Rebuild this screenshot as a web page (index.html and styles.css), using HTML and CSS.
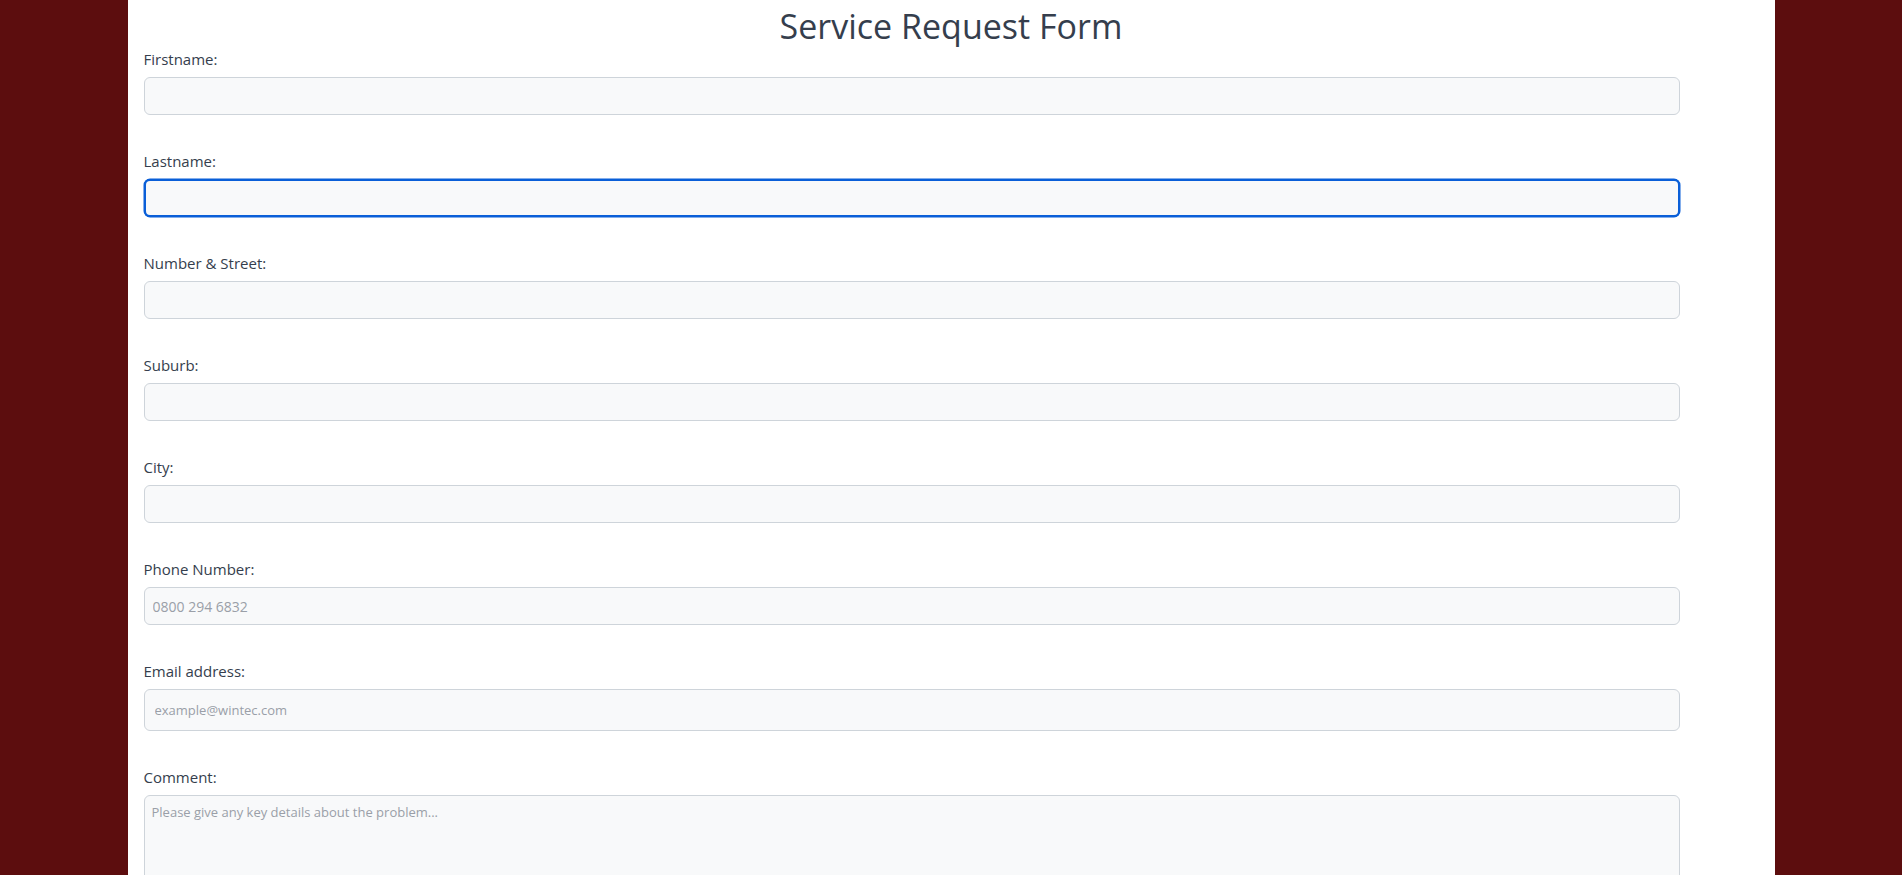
FILE: index.html
```html
<!DOCTYPE html>
<html lang="en">
<head>
<meta charset="utf-8">
<title>Service Request Form</title>
<link rel="stylesheet" href="styles.css">
</head>
<body>
<main class="panel">
  <h1 class="title">Service Request Form</h1>
  <form class="form">
    <div class="field">
      <label class="label" for="fn">Firstname:</label>
      <input class="input" id="fn" type="text">
    </div>
    <div class="field">
      <label class="label" for="ln">Lastname:</label>
      <input class="input input-focus" id="ln" type="text">
    </div>
    <div class="field">
      <label class="label" for="st">Number &amp; Street:</label>
      <input class="input" id="st" type="text">
    </div>
    <div class="field">
      <label class="label" for="sb">Suburb:</label>
      <input class="input" id="sb" type="text">
    </div>
    <div class="field">
      <label class="label" for="ct">City:</label>
      <input class="input" id="ct" type="text">
    </div>
    <div class="field">
      <label class="label" for="ph">Phone Number:</label>
      <input class="input input-phone" id="ph" type="tel" placeholder="0800 294 6832">
    </div>
    <div class="field">
      <label class="label" for="em">Email address:</label>
      <input class="input input-email" id="em" type="email" placeholder="example@wintec.com">
    </div>
    <div class="field">
      <label class="label" for="cm">Comment:</label>
      <textarea class="input textarea" id="cm" placeholder="Please give any key details about the problem..."></textarea>
    </div>
  </form>
</main>
</body>
</html>
```

FILE: styles.css
```css
html {
  overflow: hidden;
}
body {
  margin: 0;
  background: #5c0d0e;
  font-family: "Open Sans", "Noto Sans", "Liberation Sans", sans-serif;
  color: #353e4d;
}
.panel {
  width: 1647px;
  margin: 0 auto;
  background: #ffffff;
  min-height: 875px;
  box-sizing: border-box;
  padding: 0 95px 40px 16px;
}
.title {
  margin: 0 0 0 79px;
  text-align: center;
  font-size: 34px;
  font-weight: 400;
  line-height: 46px;
  padding-top: 3px;
  color: #353e4d;
}
.form {
  display: flex;
  flex-direction: column;
  gap: 33px;
  margin-top: -3px;
}
.field {
  display: flex;
  flex-direction: column;
}
.label {
  font-size: 15px;
  line-height: 24px;
  padding-top: 1px;
  margin-bottom: 6px;
  color: #353e4d;
}
.input {
  box-sizing: border-box;
  width: 100%;
  height: 38px;
  margin: 0;
  padding: 0 8px;
  background: #f8f9fa;
  border: 1px solid #ced4da;
  border-radius: 6px;
  font-family: inherit;
  font-size: 13px;
  color: #353e4d;
  outline: none;
}
.input::placeholder {
  color: #9a9fa8;
}
.input-focus {
  border: 2px solid #0a5fd8;
  box-shadow: 0 0 0 0.5px #0a5fd8;
}
.input-phone {
  font-size: 14px;
}
.input-email {
  height: 42px;
  padding-left: 10px;
}
.textarea {
  height: 160px;
  padding: 7px 7px;
  font-size: 13px;
  resize: vertical;
}
```
